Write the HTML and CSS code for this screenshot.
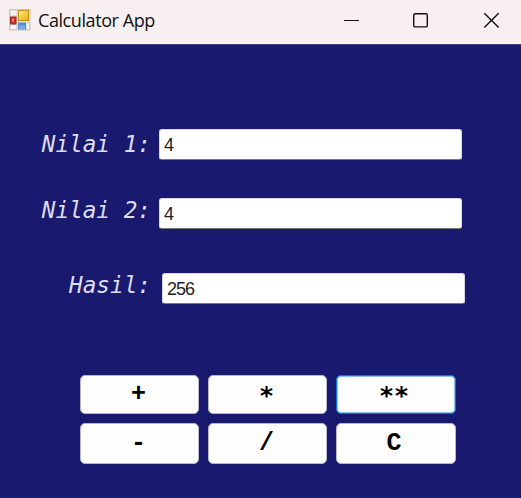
FILE: index.html
```html
<!DOCTYPE html>
<html lang="id">
<head>
<meta charset="utf-8">
<title>Calculator App</title>
<link rel="stylesheet" href="styles.css">
</head>
<body>
<header class="titlebar">
  <svg class="app-icon" width="22" height="22" viewBox="0 0 22 22">
    <defs>
      <linearGradient id="gold" x2="1" y2="1"><stop stop-color="#ffec87"/><stop offset="1" stop-color="#edad0b"/></linearGradient>
      <linearGradient id="blue" x2="0" y2="1"><stop stop-color="#4784da"/><stop offset="1" stop-color="#92bdfa"/></linearGradient>
    </defs>
    <rect x=".5" y=".5" width="20.5" height="20.5" fill="#dedcd9" stroke="#c8c6c3"/>
    <path d="M2 2h5v4H2zM2 16h5v4H2zM18 15h2v5h-2z" fill="#f5f5f3"/>
    <rect x="9.5" y="1.5" width="10" height="10" fill="url(#gold)" stroke="#c59114"/>
    <rect x="1.5" y="8" width="5.5" height="7" fill="#c93631" stroke="#a82522"/>
    <rect x="3" y="9.5" width="2" height="3" fill="#e88378"/>
    <rect x="9.5" y="14" width="7" height="6" fill="url(#blue)" stroke="#5c8fd8"/>
  </svg>
  <span class="caption">Calculator App</span>
  <svg class="controls" width="157" height="16" viewBox="0 0 157 16" fill="none" stroke="#111">
    <path d="M0 8.5h15" stroke-width="1"/>
    <rect x="69.7" y="1.7" width="13.6" height="13.2" rx="1.5" stroke-width="1.4"/>
    <path d="M140.3 1.3l14.4 14.2M154.7 1.3l-14.4 14.2" stroke-width="1.4"/>
  </svg>
</header>
<main class="form">
  <div class="field first"><label class="label" for="n1">Nilai 1:</label><input class="input" id="n1" value="4"></div>
  <div class="field second"><label class="label" for="n2">Nilai 2:</label><input class="input" id="n2" value="4"></div>
  <div class="field result"><label class="label" for="hasil">Hasil:</label><input class="input" id="hasil" value="256"></div>
  <div class="keys">
    <button class="key">+</button>
    <button class="key star">*</button>
    <button class="key star active">**</button>
    <button class="key">-</button>
    <button class="key">/</button>
    <button class="key clear">C</button>
  </div>
</main>
</body>
</html>
```
FILE: styles.css
```css
* { box-sizing: border-box; }
body { margin: 0; width: 521px; height: 498px; overflow: hidden; background: #19196f; }
.titlebar { display: flex; align-items: center; height: 44px; padding: 0 20px 4px 9px; background: #f8eff1; }
.app-icon { flex: none; }
.caption { margin-left: 7px; font: 18px/24px "Open Sans", "Noto Sans", sans-serif; letter-spacing: -0.42px; color: #111; white-space: nowrap; }
.controls { margin-left: auto; }
.form { padding-top: 84px; border-top: 1px solid #45437e; }
.field { display: flex; height: 31px; }
.first { margin-bottom: 38px; }
.second { margin-bottom: 44px; }
.label { width: 151px; margin-right: 8px; text-align: right; font: italic 22.7px/30px "DejaVu Sans Mono", monospace; color: #dddded; white-space: pre; }
.second .label, .result .label { line-height: 25px; }
.result .input { margin-left: 3px; }
.input { width: 303px; height: 31px; padding: 1px 4px 0; border: 1px solid #d8d8e8; border-bottom-color: #77777f; border-radius: 3px; background: #fff; font: 18px/27px "Liberation Sans", sans-serif; letter-spacing: -1px; color: #222; outline: none; }
.keys { display: grid; grid-template-columns: 119px 119px 120px; grid-template-rows: 39px 41px; column-gap: 9px; row-gap: 9px; margin: 71px 0 0 80px; }
.key { padding: 0 2px 1px 0; border: 1px solid #b5b5cc; border-radius: 5px; background: #fdfdfd; font: bold 25px/1 "Liberation Mono", monospace; color: #000; }
.star { padding: 1px 2px 0 0; font-family: "DejaVu Sans Mono", monospace; }
.active { padding-right: 4px; border-color: #0878d2; box-shadow: inset 0 0 0 1px #8ac0ea; }
.clear { padding-right: 4px; }
```
